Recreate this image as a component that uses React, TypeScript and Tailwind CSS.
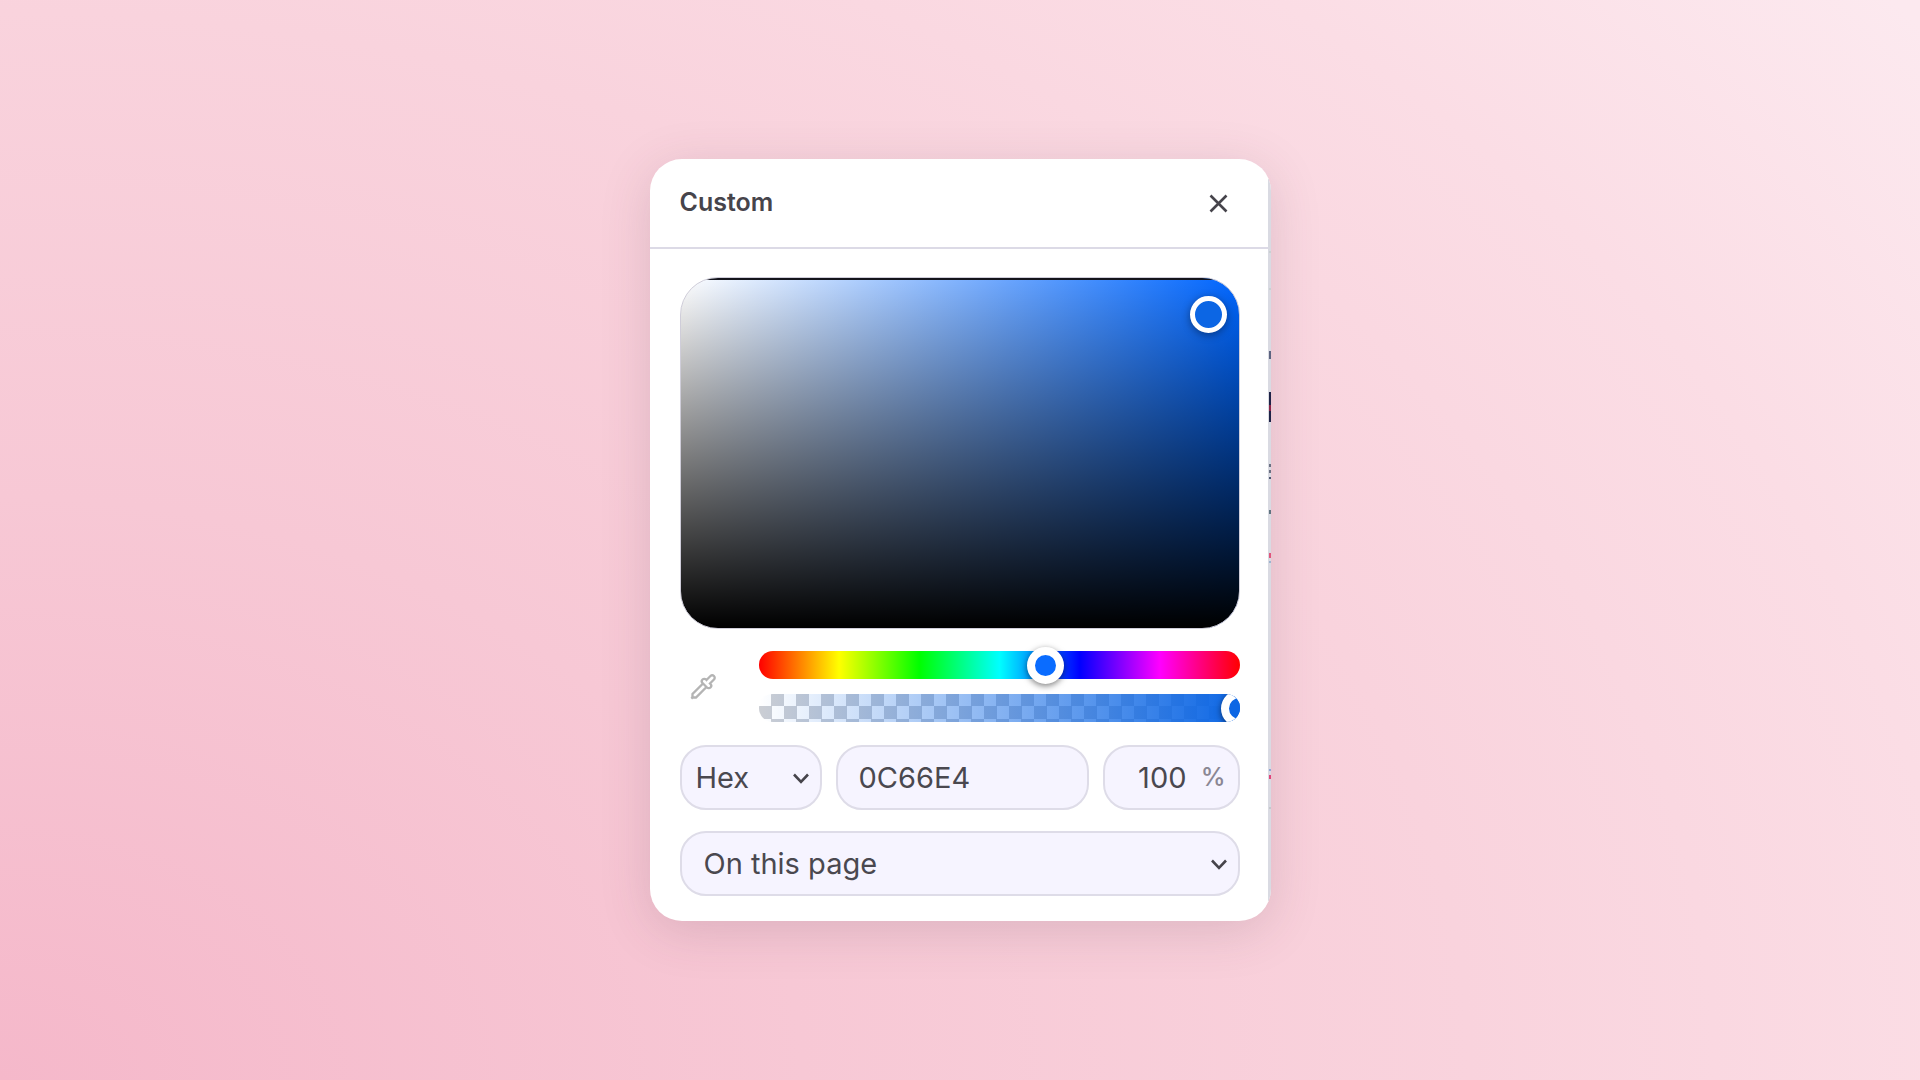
import React, {useState} from 'react';

interface FragmentType {
    y: number;
    height: number;
    color: string;
}

// slivers of the page that lies behind the right edge of the panel
const fragments: FragmentType[] = [
    {y: 92, height: 2, color: "#c9d0d2"},
    {y: 129, height: 2, color: "#c9d0d2"},
    {y: 192, height: 8, color: "#5c6480"},
    {y: 233, height: 30, color: "#1e2347"},
    {y: 246, height: 6, color: "#8a2348"},
    {y: 305, height: 3, color: "#6b7183"},
    {y: 311, height: 3, color: "#6b7183"},
    {y: 318, height: 2, color: "#4d5670"},
    {y: 351, height: 4, color: "#5f7480"},
    {y: 394, height: 5, color: "#e0557c"},
    {y: 402, height: 2, color: "#9db4d0"},
    {y: 610, height: 2, color: "#8fa6d8"},
    {y: 616, height: 4, color: "#e0457a"},
    {y: 648, height: 2, color: "#c4c8cc"},
];

const field = "h-[65px] w-full rounded-[26px] border-2 border-[#dedce8] bg-[#f6f4ff] text-[29px] text-[#4a484f] outline-none";

const thumb = "appearance-none [&::-webkit-slider-thumb]:size-[37px] [&::-webkit-slider-thumb]:appearance-none [&::-webkit-slider-thumb]:rounded-full [&::-webkit-slider-thumb]:border-8 [&::-webkit-slider-thumb]:border-white [&::-webkit-slider-thumb]:shadow-[0_2px_6px_rgba(0,0,0,0.5)]";

const Chevron: React.FC = () => (
    <svg className="pointer-events-none absolute top-1/2 right-3 h-3 w-[18px] -translate-y-1/2" viewBox="0 0 18 12"
         fill="none" stroke="#46444b" strokeWidth="2.600">
        <path d="M2 2.500 L9 9.800 L16 2.500"/>
    </svg>
);

const App: React.FC = () => {
    const [hue, setHue] = useState(218);
    const [alpha, setAlpha] = useState(100);
    const [hex, setHex] = useState("0C66E4");

    return (
        <main className="flex min-h-screen items-center justify-center bg-[radial-gradient(116%_150%_at_0%_100%,#f5b8ca_0%,#f7c8d5_36%,#f9d3dd_66%,#fbdde5_88%,#fce9ef_108%)] font-[Inter,sans-serif]">
            <section className="relative w-full max-w-[621px] overflow-hidden rounded-[32px] bg-white pr-[3px] shadow-[0_10px_50px_rgba(90,60,80,0.17)]">
                <div className="absolute inset-y-5 right-0 w-[3px] bg-[#d9dae2]"/>
                <svg className="absolute top-0 right-0 h-full w-[2px]" aria-hidden="true">
                    {fragments.map((item) => (
                        <rect key={item.y} x="0" y={item.y} width="2" height={item.height} fill={item.color}/>
                    ))}
                </svg>
                <header className="flex h-[90px] items-center justify-between border-b-2 border-[#dcdae6] pr-8 pl-[30px]">
                    <h1 className="text-[25px] font-semibold text-[#46444b]">Custom</h1>
                    <button type="button" aria-label="Close" className="p-2">
                        <svg className="size-[19px]" viewBox="0 0 19 19" fill="none" stroke="#46444b" strokeWidth="2.600">
                            <path d="M1.500 1.500 L17.500 17.500 M17.500 1.500 L1.500 17.500"/>
                        </svg>
                    </button>
                </header>

                <div className="pt-7 pr-7 pb-[25px] pl-[30px]">
                    <div className="relative h-[352px] overflow-hidden rounded-[38px] border border-[#cfcdd9] bg-[linear-gradient(to_top,#000,transparent),linear-gradient(to_right,#fff,#0066ff)]">
                        <div className="h-[2px] bg-[#14141c]"/>
                        <button type="button" aria-label="Saturation and brightness"
                                className="absolute top-[18px] right-3 size-[37px] rounded-full border-[5px] border-white bg-[#0c66e4] shadow-[0_2px_8px_rgba(0,0,0,0.4)]"/>
                    </div>

                    <div className="mt-[22px] flex items-center">
                        <button type="button" aria-label="Pick a color from the screen" className="mr-[42px] ml-[9px]">
                            <svg className="size-7" viewBox="0 0 24 24" fill="none" stroke="#b4b4b4" strokeWidth="2">
                                <path d="m2 22 1-1h3l9-9"/>
                                <path d="M3 21v-3l9-9"/>
                                <path d="m15 6 3.400-3.400a2.100 2.100 0 1 1 3 3L18 9l.4.4a2.100 2.100 0 1 1-3 3l-3.800-3.800a2.100 2.100 0 1 1 3-3l.4.4Z"/>
                            </svg>
                        </button>
                        <div className="flex flex-1 flex-col gap-[15px]">
                            <input type="range" aria-label="Hue" min={0} max={360} value={hue}
                                   onChange={(e) => setHue(Number(e.target.value))}
                                   className={`${thumb} block h-7 w-full rounded-full bg-[linear-gradient(to_right,#f00,#ff0,#0f0,#0ff,#00f,#f0f,#f00)] [&::-webkit-slider-thumb]:bg-[#0a6cff]`}/>
                            <div className="h-7 overflow-hidden rounded-full bg-[linear-gradient(to_right,transparent,#0c66e4),conic-gradient(#cbced4_25%,#fff_0_50%,#cbced4_0_75%,#fff_0)] bg-[size:100%_100%,25px_26px] bg-[position:0_0,0_-1px]">
                                <input type="range" aria-label="Opacity" min={0} max={100} value={alpha}
                                       onChange={(e) => setAlpha(Number(e.target.value))}
                                       className={`${thumb} block h-7 w-[calc(100%+18px)] bg-transparent [&::-webkit-slider-thumb]:bg-[#0c66e4]`}/>
                            </div>
                        </div>
                    </div>

                    <div className="mt-[23px] grid grid-cols-[142fr_253fr_137fr] gap-[14px]">
                        <div className="relative">
                            <select aria-label="Color format" className={`${field} appearance-none pl-[14px]`}>
                                <option>Hex</option>
                            </select>
                            <Chevron/>
                        </div>
                        <input type="text" aria-label="Hex value" value={hex}
                               onChange={(e) => setHex(e.target.value)} className={`${field} px-[21px]`}/>
                        <div className="relative">
                            <input type="text" aria-label="Opacity in percent" value={alpha}
                                   onChange={(e) => setAlpha(Number(e.target.value) || 0)}
                                   className={`${field} pr-[51px] text-right`}/>
                            <span className="pointer-events-none absolute inset-y-0 right-[14px] flex items-center text-[25px] font-medium text-[#8a8794]">%</span>
                        </div>
                    </div>

                    <div className="relative mt-[21px]">
                        <select aria-label="Color source" className={`${field} appearance-none pl-[22px]`}>
                            <option>On this page</option>
                        </select>
                        <Chevron/>
                    </div>
                </div>
            </section>
        </main>
    );
};

export default App;
